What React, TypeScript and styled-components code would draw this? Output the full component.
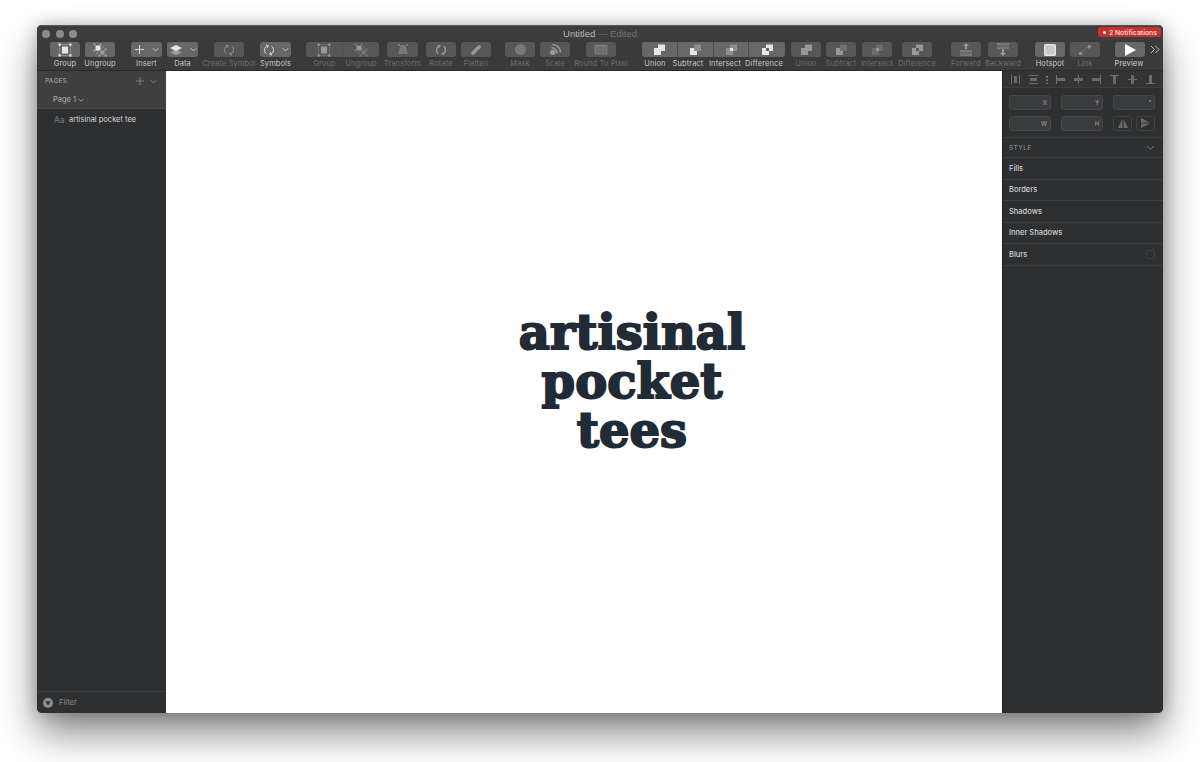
import React from 'react'
import styled, { createGlobalStyle } from 'styled-components'

const GlobalStyle = createGlobalStyle`
  html, body {
    margin: 0;
    background: #fff;
    font-family: Inter, "Liberation Sans", sans-serif;
    -webkit-font-smoothing: antialiased;
  }
`

type IconName =
  | 'group' | 'ungroup' | 'plus' | 'data' | 'symbol' | 'transform' | 'rotate' | 'flatten'
  | 'mask' | 'scale' | 'round' | 'union' | 'subtract' | 'intersect' | 'difference'
  | 'forward' | 'backward' | 'hotspot' | 'link' | 'preview'

const Chevron: React.FC<{ color?: string; size?: number; weight?: number }> = ({
  color = '#cfcfcf',
  size = 7,
  weight = 1.1,
}) => (
  <svg width={size} height={size} viewBox="0 0 8 8" fill="none">
    <path d="M1 2.6 L4 5.6 L7 2.6" stroke={color} strokeWidth={weight} />
  </svg>
)

const Glyph: React.FC<{ name: IconName; on: boolean }> = ({ name, on }) => {
  const c = on ? '#e6e6e6' : '#989898'
  const d = on ? '#a0a0a0' : '#787878'
  switch (name) {
    case 'group':
      return (
        <svg width="14" height="14" viewBox="0 0 14 14">
          <rect x="1.5" y="1.5" width="11" height="11" fill="none" stroke={d} strokeWidth="0.6" />
          <rect x="4" y="3.5" width="6" height="7" fill={c} />
          <path d="M0.5 0.5h2.2v2.2H0.5zM11.3 0.5h2.2v2.2h-2.2zM0.5 11.3h2.2v2.2H0.5zM11.3 11.3h2.2v2.2h-2.2z" fill={c} />
        </svg>
      )
    case 'ungroup':
      return (
        <svg width="14" height="14" viewBox="0 0 14 14">
          <rect x="2.5" y="2.5" width="5" height="5" fill={c} />
          <rect x="7.5" y="7.5" width="4" height="4" fill={d} />
          <path d="M0.5 0.5h2v2h-2zM6.5 0.5h2v2h-2zM0.5 6.5h2v2h-2zM11.5 5.5h2v2h-2zM5.5 11.5h2v2h-2zM11.5 11.5h2v2h-2z" fill={d} />
          <path d="M3 11 L11 3" stroke={d} strokeWidth="0.8" />
        </svg>
      )
    case 'plus':
      return (
        <svg width="11" height="11" viewBox="0 0 11 11">
          <path d="M5.5 1v9M1 5.5h9" stroke={c} strokeWidth="0.9" />
        </svg>
      )
    case 'data':
      return (
        <svg width="14" height="12" viewBox="0 0 14 12">
          <path d="M7 5.5 L13 8.2 L7 11 L1 8.2 Z" fill={d} />
          <path d="M7 1 L13 4 L7 7 L1 4 Z" fill={c} />
        </svg>
      )
    case 'symbol':
      return (
        <svg width="12" height="12" viewBox="0 0 12 12" fill="none" stroke={c} strokeWidth="1">
          <path d="M4.4 1.8 A4.6 4.6 0 0 0 3.2 9.6" />
          <path d="M7.6 10.2 A4.6 4.6 0 0 0 8.8 2.4" />
          <path d="M3 0.8 L5.2 1.8 L4.2 3.8" />
          <path d="M9 11.2 L6.8 10.2 L7.8 8.2" />
        </svg>
      )
    case 'transform':
      return (
        <svg width="12" height="11" viewBox="0 0 12 11">
          <path d="M3.5 1 H8.5 L11 10 H1 Z" fill={d} />
          <path d="M1 0h2v2H1zM9 0h2v2H9z" fill={d} />
        </svg>
      )
    case 'rotate':
      return (
        <svg width="12" height="12" viewBox="0 0 12 12" fill="none" stroke={c} strokeWidth="1.4">
          <path d="M4.4 1.8 A4.6 4.6 0 0 0 3.2 9.6" />
          <path d="M7.6 10.2 A4.6 4.6 0 0 0 8.8 2.4" />
          <path d="M3 0.8 L5.2 1.8 L4.2 3.8" strokeWidth="0.9" />
          <path d="M9 11.2 L6.8 10.2 L7.8 8.2" strokeWidth="0.9" />
        </svg>
      )
    case 'flatten':
      return (
        <svg width="12" height="12" viewBox="0 0 12 12">
          <path d="M1.5 8 L8 1.5 A1.8 1.8 0 0 1 10.5 4 L4 10.5 A1.8 1.8 0 0 1 1.5 8 Z" fill={c} />
        </svg>
      )
    case 'mask':
      return (
        <svg width="13" height="13" viewBox="0 0 13 13">
          <circle cx="6.5" cy="6.5" r="5.5" fill={d} />
        </svg>
      )
    case 'scale':
      return (
        <svg width="13" height="13" viewBox="0 0 13 13" fill="none" stroke={c}>
          <circle cx="3.8" cy="9.2" r="2.8" fill={c} stroke="none" />
          <path d="M2.5 4.8 A5.7 5.7 0 0 1 8.2 10.5" strokeWidth="1.6" />
          <path d="M3.5 1.5 A8 8 0 0 1 11.5 9.5" strokeWidth="1.6" />
        </svg>
      )
    case 'round':
      return (
        <svg width="14" height="11" viewBox="0 0 14 11">
          <rect x="0.5" y="0.5" width="13" height="10" fill={d} />
          <path d="M2 3h10v6H2z" fill="#6a6a6a" />
          <path d="M2 5h10M2 7h10M5 3v6M9 3v6" stroke={d} strokeWidth="0.5" />
        </svg>
      )
    case 'union':
      return (
        <svg width="13" height="13" viewBox="0 0 13 13">
          <path d="M5 1.5 H12 V8 H8 V12 H1 V5 H5 Z" fill={c} />
        </svg>
      )
    case 'subtract':
      return (
        <svg width="13" height="13" viewBox="0 0 13 13">
          <rect x="5" y="1.5" width="7" height="6.5" fill={d} opacity="0.7" />
          <path d="M1 5 H5 V8 H8 V12 H1 Z" fill={c} />
        </svg>
      )
    case 'intersect':
      return (
        <svg width="13" height="13" viewBox="0 0 13 13">
          <rect x="5" y="1.5" width="7" height="6.5" fill={d} opacity="0.7" />
          <rect x="1" y="5" width="7" height="7" fill={d} opacity="0.7" />
          <rect x="5" y="5" width="3" height="3" fill={c} />
        </svg>
      )
    case 'difference':
      return (
        <svg width="13" height="13" viewBox="0 0 13 13">
          <path d="M5 1.5 H12 V8 H8 V5 H5 Z" fill={c} />
          <path d="M1 5 H5 V8 H8 V12 H1 Z" fill={c} />
        </svg>
      )
    case 'forward':
      return (
        <svg width="14" height="13" viewBox="0 0 14 13">
          <path d="M7 0 L10 3 H8 V6 H6 V3 H4 Z" fill={c} />
          <path d="M1 7h12v2.5H1z" fill={d} />
          <path d="M1 10.5h12V13H1z" fill={d} />
        </svg>
      )
    case 'backward':
      return (
        <svg width="14" height="13" viewBox="0 0 14 13">
          <path d="M1 0h12v2.5H1z" fill={d} />
          <path d="M1 3.5h12V6H1z" fill={d} />
          <path d="M6 6h2v4h2l-3 3-3-3h2z" fill={c} />
        </svg>
      )
    case 'hotspot':
      return (
        <svg width="12" height="12" viewBox="0 0 12 12">
          <rect width="12" height="12" rx="1.5" fill="#e4e4e4" />
          <rect x="1.5" y="1.5" width="9" height="9" fill="#c8c8c8" />
        </svg>
      )
    case 'link':
      return (
        <svg width="14" height="12" viewBox="0 0 14 12" fill="none">
          <path d="M2.5 9.5 C6 10 5 4 10.5 3" stroke={d} strokeWidth="1" />
          <circle cx="2.5" cy="9.5" r="1.6" fill={c} />
          <path d="M10 0.5 L13.5 2.5 L10.5 5 Z" fill={c} />
        </svg>
      )
    case 'preview':
      return (
        <svg width="14" height="14" viewBox="0 0 14 14">
          <path d="M2 1 L13 7 L2 13 Z" fill="#fff" />
        </svg>
      )
  }
}

const AlignGlyph: React.FC<{ d: string; bar: string }> = ({ d, bar }) => (
  <svg width="11" height="11" viewBox="0 0 11 11">
    <path d={bar} fill="#6e6e6e" />
    <path d={d} fill="#6a6a6a" />
  </svg>
)

const Page = styled.div`
  box-sizing: border-box;
  height: 762px;
  padding: 25px 37px 49px;
  overflow: hidden;
`

const Window = styled.div`
  height: 688px;
  display: flex;
  flex-direction: column;
  border-radius: 5px;
  overflow: hidden;
  background: #2e2f30;
  box-shadow: 0 20px 38px rgba(0, 0, 0, 0.48), 0 0 16px rgba(0, 0, 0, 0.22);
`

const TitleBar = styled.div`
  height: 15px;
  box-sizing: border-box;
  flex: none;
  display: grid;
  grid-template-columns: 1fr auto 1fr;
  align-items: center;
  background: #3d3d3d;
  border-top: 1px solid #585858;
`

const Lights = styled.div`
  display: flex;
  gap: 5.5px;
  padding: 1px 0 0 5px;
`

const Light = styled.span`
  width: 8px;
  height: 8px;
  border-radius: 50%;
  background: #8b8b8b;
`

const Title = styled.div`
  font-family: "Liberation Sans", sans-serif;
  font-size: 9.5px;
  color: #b8b8b8;

  span {
    color: #737373;
  }
`

const Badge = styled.div`
  justify-self: end;
  align-self: start;
  height: 10px;
  margin: 1px 2px 0 0;
  padding: 0 4px 0 5px;
  display: flex;
  align-items: center;
  gap: 3px;
  border-radius: 2.5px;
  background: #c8302d;
  color: #f0d6d6;
  font-size: 6.8px;
  font-weight: 600;
  white-space: nowrap;

  i {
    width: 3px;
    height: 3px;
    border-radius: 50%;
    background: #fff;
  }
`

const Toolbar = styled.div`
  height: 31px;
  box-sizing: border-box;
  flex: none;
  display: flex;
  align-items: flex-start;
  padding: 2px 0 0 13px;
  background: #3a3a3a;
  border-bottom: 1px solid #2a2a2a;
`

const Item = styled.div<{ $w: number; $ml: number }>`
  flex: none;
  width: ${p => p.$w}px;
  margin-left: ${p => p.$ml}px;
  display: flex;
  flex-direction: column;
  align-items: center;
`

const Btn = styled.div<{ $on: boolean; $seg?: 'first' | 'mid' | 'last' }>`
  width: 100%;
  height: 15px;
  display: flex;
  align-items: center;
  justify-content: center;
  gap: 7px;
  background: ${p => (p.$on ? '#676767' : '#575757')};
  border-radius: ${p =>
    p.$seg === 'first' ? '3px 0 0 3px' : p.$seg === 'last' ? '0 3px 3px 0' : p.$seg === 'mid' ? '0' : '3px'};
  border-right: ${p => (p.$seg && p.$seg !== 'last' ? '1px solid #4e4e4e' : 'none')};
  box-sizing: border-box;
`

const Label = styled.div<{ $on: boolean; $dx?: number }>`
  margin-top: 2px;
  font-size: 7.5px;
  line-height: 9px;
  letter-spacing: 0.1px;
  white-space: nowrap;
  color: ${p => (p.$on ? '#c8c8c8' : '#6f6f6f')};
  transform: translateX(${p => p.$dx ?? 0}px);
`

const More = styled.div`
  margin-left: 5px;
  height: 15px;
  display: flex;
  align-items: center;
`

const Body = styled.div`
  flex: 1;
  min-height: 0;
  display: flex;
`

const Sidebar = styled.aside`
  width: 129px;
  flex: none;
  display: flex;
  flex-direction: column;
  box-sizing: border-box;
  background: #2e2f30;
`

const PagesHead = styled.div`
  height: 38px;
  box-sizing: border-box;
  flex: none;
  background: #3f3f3f;
  border-bottom: 1px solid #4b4b4b;
`

const PagesRow = styled.div`
  height: 20px;
  display: flex;
  align-items: center;
  padding: 0 9px 0 8px;
  gap: 5px;
  font-size: 6.5px;
  font-weight: 500;
  letter-spacing: 0.2px;
  color: #9c9c9c;

  b {
    flex: 1;
    font-weight: 500;
  }
`

const PageRow = styled.div`
  height: 17px;
  display: flex;
  align-items: center;
  gap: 2px;
  padding-left: 16px;
  font-size: 7.5px;
  color: #b0b0b0;
`

const Layer = styled.div`
  height: 21px;
  display: flex;
  align-items: center;
  padding-left: 17px;
  font-size: 7.5px;
  color: #d8d8d8;

  span {
    width: 15px;
    font-size: 8.5px;
    color: #7a7a7a;
  }
`

const Spacer = styled.div`
  flex: 1;
`

const FilterBar = styled.div`
  height: 22px;
  box-sizing: border-box;
  display: flex;
  align-items: center;
  gap: 6px;
  padding-left: 6px;
  border-top: 1px solid #3f3f3f;
  font-size: 7.5px;
  color: #8d8d8d;
`

const Canvas = styled.main`
  flex: 1;
  display: flex;
  align-items: center;
  justify-content: center;
  padding: 0 0 22px 96px;
  background: #fff;
`

const Artwork = styled.div`
  font-family: "DejaVu Serif", serif;
  font-weight: 700;
  font-size: 48px;
  line-height: 49px;
  text-align: center;
  color: #212b36;
  -webkit-text-stroke: 2px #212b36;
`

const Inspector = styled.aside`
  width: 161px;
  flex: none;
  display: flex;
  flex-direction: column;
  background: #2e2f30;
  border-left: 1px solid #1f1f1f;
  box-sizing: border-box;
`

const AlignRow = styled.div`
  height: 17px;
  box-sizing: border-box;
  display: flex;
  align-items: center;
  gap: 7px;
  padding-left: 6.5px;
  background: #333435;
  border-bottom: 1px solid #3e3e3e;
`

const Dots = styled.span`
  width: 2px;
  height: 9px;
  background: radial-gradient(circle, #7a7a7a 0.8px, transparent 1px) 0 0 / 2px 3.5px;
`

const Fields = styled.div`
  display: grid;
  grid-template-columns: repeat(3, 42px);
  gap: 5.5px 10.2px;
  padding: 7px 0 6.5px 6px;
  border-bottom: 1px solid #3e3e3e;
`

const Field = styled.div`
  height: 15px;
  box-sizing: border-box;
  display: flex;
  align-items: center;
  justify-content: flex-end;
  padding-right: 3px;
  background: #3a3b3c;
  border: 1px solid #474747;
  border-radius: 2.5px;
  font-size: 6px;
  font-weight: 600;
  color: #8a8a8a;
`

const FlipPair = styled.div`
  display: flex;
  justify-content: space-between;
`

const Flip = styled.div`
  width: 19px;
  height: 15px;
  box-sizing: border-box;
  display: flex;
  align-items: center;
  justify-content: center;
  border: 1px solid #424242;
  border-radius: 2.5px;
`

const StyleHead = styled.div`
  height: 20px;
  box-sizing: border-box;
  display: flex;
  align-items: center;
  justify-content: space-between;
  padding: 0 8px 0 6px;
  border-bottom: 1px solid #3e3e3e;
  font-size: 6.5px;
  font-weight: 500;
  letter-spacing: 0.4px;
  color: #858585;
`

const StyleRow = styled.div`
  height: 21.5px;
  box-sizing: border-box;
  display: flex;
  align-items: center;
  justify-content: space-between;
  padding: 0 8px 0 6px;
  border-bottom: 1px solid #3e3e3e;
  font-size: 7.5px;
  font-weight: 500;
  color: #d0d0d0;

  i {
    width: 7px;
    height: 7px;
    border: 1px solid #414141;
    border-radius: 2px;
  }
`

type Tool = {
  label: string
  icon: IconName
  w: number
  ml: number
  on?: boolean
  seg?: 'first' | 'mid' | 'last'
  menu?: boolean
  dx?: number
}

const tools: Tool[] = [
  { label: 'Group', icon: 'group', w: 30, ml: 0, on: true },
  { label: 'Ungroup', icon: 'ungroup', w: 30, ml: 5, on: true },
  { label: 'Insert', icon: 'plus', w: 31, ml: 16, on: true, menu: true },
  { label: 'Data', icon: 'data', w: 31, ml: 5, on: true, menu: true },
  { label: 'Create Symbol', icon: 'symbol', w: 30, ml: 16 },
  { label: 'Symbols', icon: 'symbol', w: 31, ml: 16, on: true, menu: true },
  { label: 'Group', icon: 'group', w: 37, ml: 15, seg: 'first' },
  { label: 'Ungroup', icon: 'ungroup', w: 36, ml: 0, seg: 'last' },
  { label: 'Transform', icon: 'transform', w: 31, ml: 8 },
  { label: 'Rotate', icon: 'rotate', w: 30, ml: 8 },
  { label: 'Flatten', icon: 'flatten', w: 30, ml: 5 },
  { label: 'Mask', icon: 'mask', w: 30, ml: 14 },
  { label: 'Scale', icon: 'scale', w: 30, ml: 5 },
  { label: 'Round To Pixel', icon: 'round', w: 30, ml: 16 },
  { label: 'Union', icon: 'union', w: 36, ml: 26, on: true, seg: 'first', dx: -5 },
  { label: 'Subtract', icon: 'subtract', w: 36, ml: 0, on: true, seg: 'mid', dx: -8 },
  { label: 'Intersect', icon: 'intersect', w: 35, ml: 0, on: true, seg: 'mid', dx: -6.5 },
  { label: 'Difference', icon: 'difference', w: 36, ml: 0, on: true, seg: 'last', dx: -3 },
  { label: 'Union', icon: 'union', w: 30, ml: 6 },
  { label: 'Subtract', icon: 'subtract', w: 30, ml: 5 },
  { label: 'Intersect', icon: 'intersect', w: 30, ml: 6 },
  { label: 'Difference', icon: 'difference', w: 30, ml: 10 },
  { label: 'Forward', icon: 'forward', w: 30, ml: 19 },
  { label: 'Backward', icon: 'backward', w: 30, ml: 7 },
  { label: 'Hotspot', icon: 'hotspot', w: 30, ml: 17, on: true },
  { label: 'Link', icon: 'link', w: 30, ml: 5 },
  { label: 'Preview', icon: 'preview', w: 30, ml: 15, on: true, dx: -1 },
]

const alignsLeft = [
  { bar: 'M1 1h1v9H1zM9 1h1v9H9z', d: 'M4 2h3v7H4z' },
  { bar: 'M1 1h9v1H1zM1 9h9v1H1z', d: 'M2 4h7v3H2z' },
]

const alignsRight = [
  { bar: 'M1 1h1v9H1z', d: 'M2 4h8v3H2z' },
  { bar: 'M5 1h1v9H5z', d: 'M1 4h9v3H1z' },
  { bar: 'M9 1h1v9H9z', d: 'M1 4h8v3H1z' },
  { bar: 'M1 1h9v1H1z', d: 'M4 2h3v8H4z' },
  { bar: 'M1 5h9v1H1z', d: 'M4 1h3v9H4z' },
  { bar: 'M1 9h9v1H1z', d: 'M4 1h3v8H4z' },
]

const styleRows = ['Fills', 'Borders', 'Shadows', 'Inner Shadows', 'Blurs']

const App: React.FC = () => (
  <>
    <GlobalStyle />
    <Page>
      <Window>
        <TitleBar>
          <Lights>
            <Light />
            <Light />
            <Light />
          </Lights>
          <Title>
            Untitled <span>— Edited</span>
          </Title>
          <Badge>
            <i />2 Notifications
          </Badge>
        </TitleBar>
        <Toolbar>
          {tools.map((t, i) => (
            <Item key={i} $w={t.w} $ml={t.ml}>
              <Btn $on={!!t.on} $seg={t.seg}>
                <Glyph name={t.icon} on={!!t.on} />
                {t.menu && <Chevron />}
              </Btn>
              <Label $on={!!t.on} $dx={t.dx}>{t.label}</Label>
            </Item>
          ))}
          <More>
            <svg width="10" height="9" viewBox="0 0 10 9" fill="none" stroke="#cfcfcf" strokeWidth="0.9">
              <path d="M1 1l3.5 3.5L1 8M5.5 1L9 4.5 5.5 8" />
            </svg>
          </More>
        </Toolbar>
        <Body>
          <Sidebar>
            <PagesHead>
              <PagesRow>
                <b>PAGES</b>
                <svg width="10" height="10" viewBox="0 0 10 10">
                  <path d="M5 1v8M1 5h8" stroke="#858585" strokeWidth="0.9" />
                </svg>
                <Chevron color="#858585" />
              </PagesRow>
              <PageRow>
                Page 1 <Chevron color="#b0b0b0" size={6} />
              </PageRow>
            </PagesHead>
            <Layer>
              <span>Aa</span>artisinal pocket tee
            </Layer>
            <Spacer />
            <FilterBar>
              <svg width="10" height="10" viewBox="0 0 10 10">
                <circle cx="5" cy="5" r="5" fill="#8f8f8f" />
                <path d="M2.2 3.2h5.6L5 7.4z" fill="#2e2f30" />
              </svg>
              Filter
            </FilterBar>
          </Sidebar>
          <Canvas>
            <Artwork>
              artisinal
              <br />
              pocket
              <br />
              tees
            </Artwork>
          </Canvas>
          <Inspector>
            <AlignRow>
              {alignsLeft.map((a, i) => (
                <AlignGlyph key={i} bar={a.bar} d={a.d} />
              ))}
              <Dots />
              {alignsRight.map((a, i) => (
                <AlignGlyph key={i} bar={a.bar} d={a.d} />
              ))}
            </AlignRow>
            <Fields>
              <Field>X</Field>
              <Field>Y</Field>
              <Field>°</Field>
              <Field>W</Field>
              <Field>H</Field>
              <FlipPair>
                <Flip>
                  <svg width="10" height="9" viewBox="0 0 10 9">
                    <path d="M4.4 0v9H0zM5.6 0v9H10z" fill="#6a6a6a" />
                  </svg>
                </Flip>
                <Flip>
                  <svg width="9" height="10" viewBox="0 0 9 10">
                    <path d="M0 4.4h9L0 0zM0 5.6h9L0 10z" fill="#6a6a6a" />
                  </svg>
                </Flip>
              </FlipPair>
            </Fields>
            <StyleHead>
              STYLE
              <Chevron color="#858585" size={9} weight={0.8} />
            </StyleHead>
            {styleRows.map(r => (
              <StyleRow key={r}>
                {r}
                {r === 'Blurs' && <i />}
              </StyleRow>
            ))}
          </Inspector>
        </Body>
      </Window>
    </Page>
  </>
)

export default App
